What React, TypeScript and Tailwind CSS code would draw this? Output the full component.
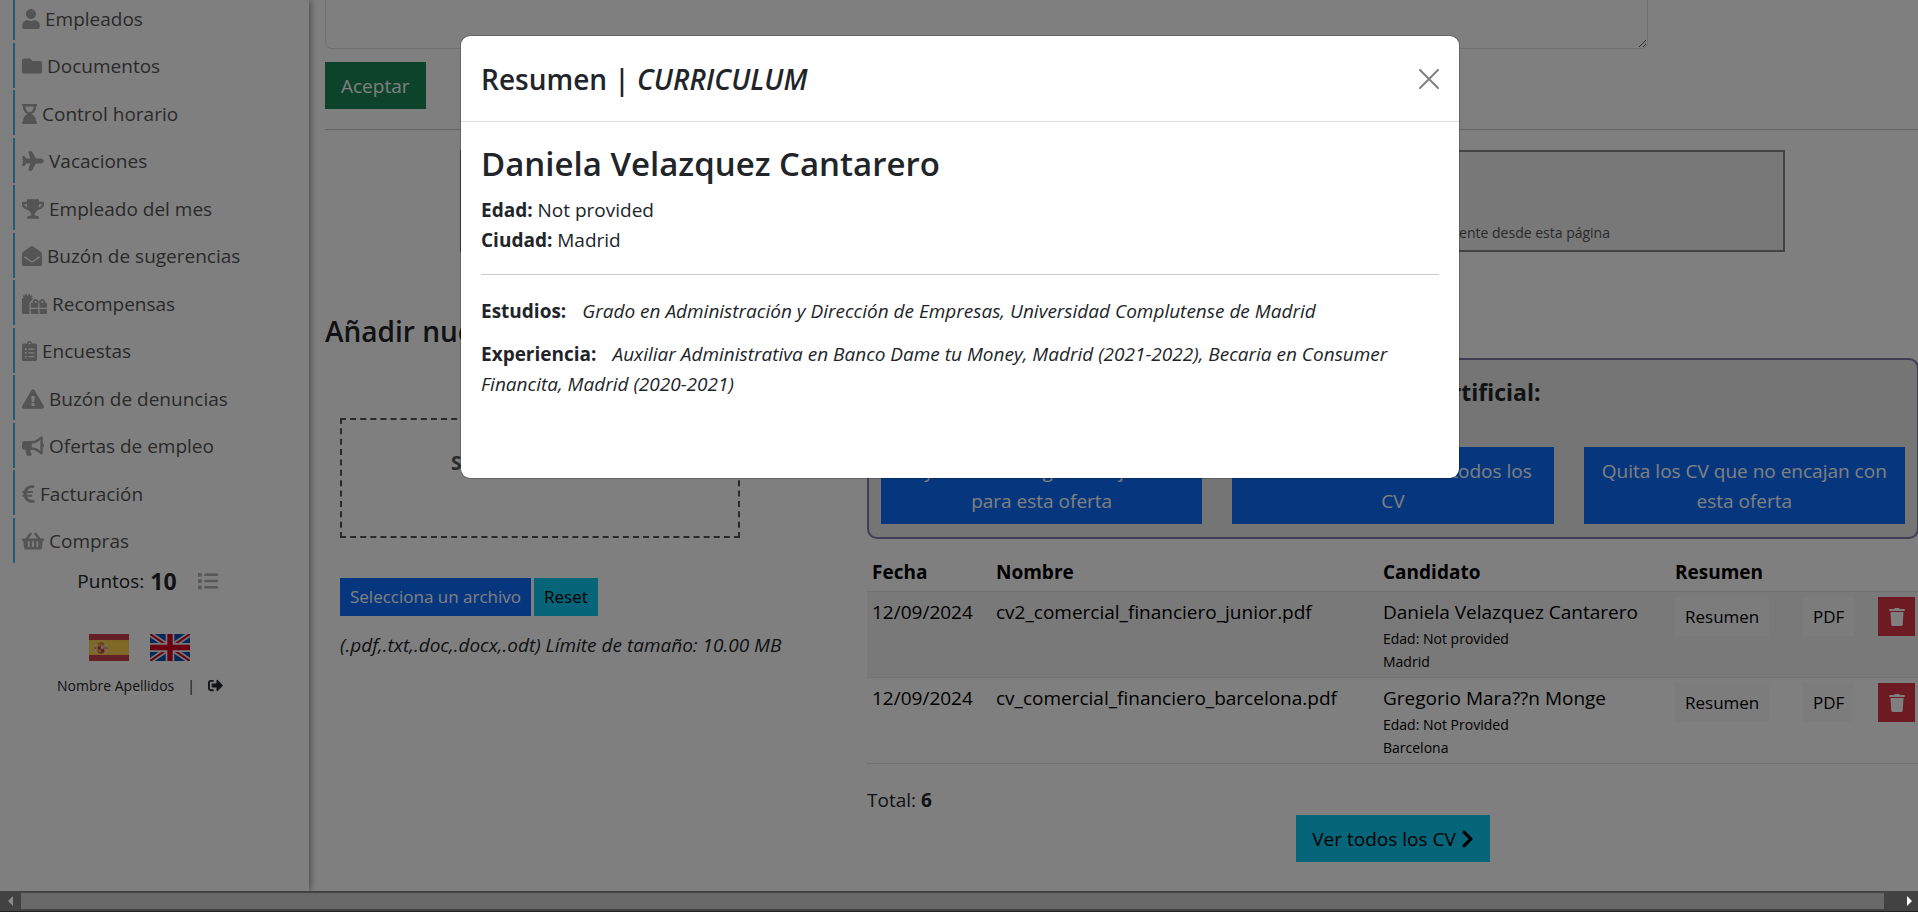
import type { FC, ReactNode } from 'react';
import type { IconType } from 'react-icons';
import {
  FaBullhorn,
  FaChevronRight,
  FaClipboardList,
  FaEnvelopeOpen,
  FaEuroSign,
  FaExclamationTriangle,
  FaFolder,
  FaGifts,
  FaHourglassEnd,
  FaList,
  FaPlane,
  FaShoppingBasket,
  FaSignOutAlt,
  FaTrophy,
  FaUser,
} from 'react-icons/fa';

interface MenuItem {
  label: string;
  icon: IconType;
  width: string;
}

const menu: MenuItem[] = [
  { label: 'Empleados', icon: FaUser, width: 'w-[18px]' },
  { label: 'Documentos', icon: FaFolder, width: 'w-5' },
  { label: 'Control horario', icon: FaHourglassEnd, width: 'w-[15px]' },
  { label: 'Vacaciones', icon: FaPlane, width: 'w-[22px]' },
  { label: 'Empleado del mes', icon: FaTrophy, width: 'w-[22px]' },
  { label: 'Buzón de sugerencias', icon: FaEnvelopeOpen, width: 'w-5' },
  { label: 'Recompensas', icon: FaGifts, width: 'w-[25px]' },
  { label: 'Encuestas', icon: FaClipboardList, width: 'w-[15px]' },
  { label: 'Buzón de denuncias', icon: FaExclamationTriangle, width: 'w-[22px]' },
  { label: 'Ofertas de empleo', icon: FaBullhorn, width: 'w-[22px]' },
  { label: 'Facturación', icon: FaEuroSign, width: 'w-[13px]' },
  { label: 'Compras', icon: FaShoppingBasket, width: 'w-[22px]' },
];

interface Candidate {
  date: string;
  file: string;
  name: string;
  age: string;
  city: string;
}

const candidates: Candidate[] = [
  {
    date: '12/09/2024',
    file: 'cv2_comercial_financiero_junior.pdf',
    name: 'Daniela Velazquez Cantarero',
    age: 'Not provided',
    city: 'Madrid',
  },
  {
    date: '12/09/2024',
    file: 'cv_comercial_financiero_barcelona.pdf',
    name: 'Gregorio Mara??n Monge',
    age: 'Not Provided',
    city: 'Barcelona',
  },
];

const aiActions = [
  'Ayúdame a elegir el mejor CV para esta oferta',
  'Dame un resumen de todos los CV',
  'Quita los CV que no encajan con esta oferta',
];

const SpainFlag: FC = () => (
  <svg viewBox="0 0 60 40" className="h-[27px] w-10" preserveAspectRatio="none" aria-hidden="true">
    <rect width="60" height="40" fill="#c8414b" />
    <rect y="9" width="60" height="22" fill="#ffd34f" />
    <rect x="8" y="15" width="3" height="13" fill="#e8dcc0" />
    <rect x="25" y="15" width="3" height="13" fill="#e8dcc0" />
    <path d="M8 20h3v2H8zM25 20h3v2h-3zM13 18h10v7a5 4 0 0 1-10 0z" fill="#c8414b" />
    <path d="M13 14q5-4 10 0l-1 3h-8z" fill="#d98a4a" />
    <rect x="18" y="18" width="4" height="4" fill="#e4dce8" />
    <rect x="14" y="23" width="4" height="4" fill="#e8a060" />
  </svg>
);

const UkFlag: FC = () => (
  <svg viewBox="0 0 60 40" className="h-[27px] w-10" preserveAspectRatio="none" aria-hidden="true">
    <rect width="60" height="40" fill="#0052b4" />
    <path d="M0 0l60 40M60 0L0 40" stroke="#f0f0f0" strokeWidth="8" />
    <path d="M0 0l60 40M60 0L0 40" stroke="#d80027" strokeWidth="3" />
    <path d="M30 0v40M0 20h60" stroke="#f0f0f0" strokeWidth="13" />
    <path d="M30 0v40M0 20h60" stroke="#d80027" strokeWidth="8" />
  </svg>
);

const Sidebar: FC = () => (
  <aside className="z-10 w-[309px] shrink-0 bg-white shadow-[0_0_8px_rgba(0,0,0,0.6)]">
    <nav className="-mt-[5px] ml-[13px] flex h-[568px] flex-col justify-between">
      {menu.map(({ label, icon: Icon, width }) => (
        <a
          key={label}
          href="#"
          className="flex h-[45px] items-center gap-[5px] border-l-2 border-[#44b8f0] pt-0.5 pl-[7px] text-[#555]"
        >
          <Icon className={`h-5 text-[#a8a8a8] ${width}`} />
          {label}
        </a>
      ))}
    </nav>
    <div className="flex h-9 items-center justify-center pr-[14px]">
      <span>Puntos:</span>
      <strong className="ml-[6px] text-[23px]">10</strong>
      <a href="#" aria-label="Historial de puntos" className="ml-[21px]">
        <FaList className="size-5 text-[#b0b0b0]" />
      </a>
    </div>
    <div className="mt-[35px] flex justify-center gap-[21px] pr-[30px]">
      <button type="button" aria-label="Español">
        <SpainFlag />
      </button>
      <button type="button" aria-label="English">
        <UkFlag />
      </button>
    </div>
    <div className="mt-[13px] flex items-center justify-center pr-[29px] text-[14px] leading-[23px]">
      <span>Nombre Apellidos</span>
      <span className="mx-[13px]">|</span>
      <a href="#" aria-label="Salir">
        <FaSignOutAlt className="size-[15px]" />
      </a>
    </div>
  </aside>
);

const SmallButton: FC<{ children: ReactNode }> = ({ children }) => (
  <button type="button" className="h-[39px] bg-[#f8f9fa] px-[10px] text-[17px]">
    {children}
  </button>
);

const CandidateTable: FC = () => (
  <table className="mt-[13px] w-full table-fixed border-collapse text-left text-black">
    <colgroup>
      <col className="w-[124px]" />
      <col />
      <col className="w-[292px]" />
      <col className="w-[128px]" />
      <col className="w-[75px]" />
      <col className="w-[46px]" />
    </colgroup>
    <thead>
      <tr className="border-b border-[#dee2e6]">
        <th className="px-[5px] pt-[5px] pb-1 font-bold">Fecha</th>
        <th className="px-[5px] pt-[5px] pb-1 font-bold">Nombre</th>
        <th className="px-[5px] pt-[5px] pb-1 font-bold">Candidato</th>
        <th className="px-[5px] pt-[5px] pb-1 font-bold">Resumen</th>
        <th />
        <th />
      </tr>
    </thead>
    <tbody>
      {candidates.map((c) => (
        <tr key={c.file} className="border-b border-[#dee2e6] align-top odd:bg-[#f2f2f2]">
          <td className="px-[5px] pt-[5px] pb-1 whitespace-nowrap">{c.date}</td>
          <td className="px-[5px] pt-[5px] pb-1">{c.file}</td>
          <td className="px-[5px] pt-[5px] pb-1 whitespace-nowrap">
            {c.name}
            <div className="text-[14px] leading-[23px]">Edad: {c.age}</div>
            <div className="text-[14px] leading-[23px]">{c.city}</div>
          </td>
          <td className="px-[5px] pt-[5px] pb-1">
            <SmallButton>Resumen</SmallButton>
          </td>
          <td className="px-[5px] pt-[5px] pb-1">
            <SmallButton>PDF</SmallButton>
          </td>
          <td className="px-[5px] pt-[5px] pb-1">
            <button
              type="button"
              aria-label={`Eliminar ${c.file}`}
              className="flex h-[39px] w-[37px] items-center justify-center bg-[#dc3545] text-white"
            >
              <svg viewBox="0 0 16 18" className="h-[18px] w-4" fill="currentColor" aria-hidden="true">
                <path d="M5.500 0h5v1H15.700v2H.300V1h5.200z" />
                <path d="M1.500 4h13l-.8 12.500q-.1 1.500-1.500 1.500H3.800q-1.400 0-1.500-1.500z" />
              </svg>
            </button>
          </td>
        </tr>
      ))}
    </tbody>
  </table>
);

const SummaryModal: FC = () => (
  <div className="absolute inset-0 z-20 flex items-start justify-center bg-black/50 pt-[35px] pl-0.5">
    <div
      role="dialog"
      aria-modal="true"
      aria-labelledby="summary-title"
      className="w-[1000px] max-w-full rounded-[10px] border border-black/20 bg-white bg-clip-padding pb-[79px]"
    >
      <div className="flex h-[86px] items-center justify-between border-b border-[#dee2e6] px-5">
        <h5 id="summary-title" className="pt-0.5 text-[28px] leading-[45px] font-semibold">
          Resumen | <em>CURRICULUM</em>
        </h5>
        <button type="button" aria-label="Cerrar">
          <svg viewBox="0 0 20 20" className="size-5" fill="none" stroke="#808080" strokeWidth="2" strokeLinecap="round">
            <path d="M1 1l18 18M19 1L1 19" />
          </svg>
        </button>
      </div>
      <div className="px-5 pt-[21px]">
        <h3 className="mb-[10px] text-[33px] leading-[42px] font-semibold">Daniela Velazquez Cantarero</h3>
        <p>
          <strong>Edad:</strong> Not provided
        </p>
        <p>
          <strong>Ciudad:</strong> Madrid
        </p>
        <hr className="mt-[19px] mb-[21px] border-[#c8c9ca]" />
        <p className="mb-[13px]">
          <strong className="mr-4">Estudios:</strong>
          <em>Grado en Administración y Dirección de Empresas, Universidad Complutense de Madrid</em>
        </p>
        <p>
          <strong className="mr-4">Experiencia:</strong>
          <em>
            Auxiliar Administrativa en Banco Dame tu Money, Madrid (2021-2022), Becaria en Consumer Financita, Madrid
            (2020-2021)
          </em>
        </p>
      </div>
    </div>
  </div>
);

const App: FC = () => {
  return (
    <div className="flex h-screen flex-col overflow-hidden bg-white font-['Open_Sans','Noto_Sans',sans-serif] text-[19px] leading-[30px] text-[#212529]">
      <div className="relative flex min-h-0 flex-1 overflow-hidden">
        <Sidebar />
        <main className="min-w-0 flex-1 pl-4">
          <textarea
            aria-label="Descripción"
            className="block h-[49px] w-[1323px] max-w-full rounded-b-[7px] border border-t-0 border-[#dee2e6]"
          />
          <button type="button" className="mt-[13px] block h-[47px] bg-[#198754] px-4 text-white">
            Aceptar
          </button>
          <hr className="my-5 border-[#c8c9ca]" />
          <div className="mr-[133px] ml-[135px] flex h-[102px] items-end justify-end border-2 border-[#868686] bg-[#f0f0f0] pr-[173px] pb-[6px]">
            <p className="text-[14px] leading-[23px] text-[#555]">
              Los candidatos también pueden enviar su CV directamente desde esta página
            </p>
          </div>
          <div className="flex">
            <section className="w-[542px] shrink-0 pt-[61px]">
              <h3 className="text-[28px] leading-9 font-semibold">Añadir nuevo CV</h3>
              <div className="pl-[15px]">
                <div className="mt-[69px] h-[120px] w-[400px] border-2 border-dashed border-[#555] pt-7 text-center font-bold text-[#555]">
                  Suelta aquí tu CV o
                </div>
                <div className="mt-10 flex gap-[3px]">
                  <button type="button" className="h-[38px] bg-[#0d6efd] px-[10px] text-[17px] text-white">
                    Selecciona un archivo
                  </button>
                  <button type="button" className="h-[38px] bg-[#0dcaf0] px-[10px] text-[17px] text-black">
                    Reset
                  </button>
                </div>
                <p className="mt-[14px] italic">(.pdf,.txt,.doc,.docx,.odt) Límite de tamaño: 10.00 MB</p>
              </div>
            </section>
            <section className="-mr-px min-w-0 flex-1 pt-[106px]">
              <div className="h-[181px] rounded-[10px] border-2 border-[#807cae] bg-[#eaeaea] px-3 pt-[17px]">
                <h4 className="text-center text-[23px] leading-[30px] font-bold">Usa Inteligencia Artificial:</h4>
                <div className="mt-10 grid grid-cols-3 gap-[30px]">
                  {aiActions.map((action) => (
                    <button key={action} type="button" className="h-[77px] bg-[#0d6efd] px-4 text-white">
                      {action}
                    </button>
                  ))}
                </div>
              </div>
              <CandidateTable />
              <p className="mt-[21px]">
                Total: <strong>6</strong>
              </p>
              <button type="button" className="mx-auto flex h-[47px] items-center gap-[5px] bg-[#0dcaf0] px-4 text-black">
                Ver todos los CV
                <FaChevronRight className="h-5 w-[13px]" />
              </button>
            </section>
          </div>
        </main>
        <SummaryModal />
      </div>
      <div className="flex h-[21px] shrink-0 items-center justify-between border-b border-[#231f20] bg-[#424242]">
        <svg viewBox="0 0 21 16" className="h-4 w-[21px]" aria-hidden="true">
          <path d="M13 3v10L8 8z" fill="#8a8a8a" />
        </svg>
        <div className="h-4 flex-1 bg-[#686868]" />
        <svg viewBox="0 0 34 16" className="h-4 w-[34px]" aria-hidden="true">
          <path d="M23 3v10l5-5z" fill="#fff" />
        </svg>
      </div>
    </div>
  );
};

export default App;
